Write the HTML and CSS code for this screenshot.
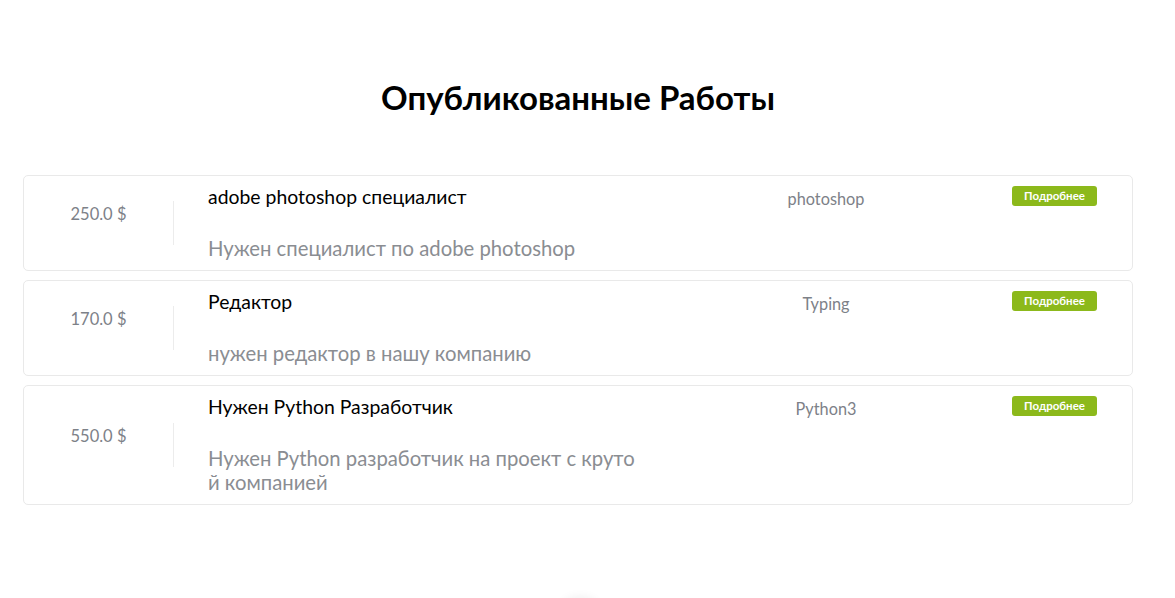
FILE: index.html
```html
<!DOCTYPE html>
<html lang="ru">
<head>
<meta charset="utf-8">
<link rel="stylesheet" href="styles.css">
</head>
<body>
<section class="works">
  <h2 class="works-title">Опубликованные Работы</h2>
  <div class="list">
    <div class="card">
      <div class="price-col"><div class="price">250.0 $</div></div>
      <div class="info">
        <div class="job-title">adobe photoshop специалист</div>
        <div class="job-desc">Нужен специалист по adobe photoshop</div>
      </div>
      <div class="tag">photoshop</div>
      <div class="action"><a class="more-btn" href="#">Подробнее</a></div>
    </div>
    <div class="card">
      <div class="price-col"><div class="price">170.0 $</div></div>
      <div class="info">
        <div class="job-title">Редактор</div>
        <div class="job-desc">нужен редактор в нашу компанию</div>
      </div>
      <div class="tag">Typing</div>
      <div class="action"><a class="more-btn" href="#">Подробнее</a></div>
    </div>
    <div class="card">
      <div class="price-col"><div class="price">550.0 $</div></div>
      <div class="info">
        <div class="job-title">Нужен Python Разработчик</div>
        <div class="job-desc">Нужен Python разработчик на проект с крутой компанией</div>
      </div>
      <div class="tag">Python3</div>
      <div class="action"><a class="more-btn" href="#">Подробнее</a></div>
    </div>
  </div>
  <div class="to-top"></div>
</section>
</body>
</html>
```
FILE: styles.css
```css
html, body {
  margin: 0;
  padding: 0;
  background: #fff;
}
body {
  font-family: "Lato", "Noto Sans", sans-serif;
  color: #000;
  overflow: hidden;
  height: 598px;
}
.works {
  position: relative;
  height: 598px;
  padding-top: 77px;
  box-sizing: border-box;
  overflow: hidden;
}
.works-title {
  margin: 0 0 58px 23px;
  width: 1110px;
  text-align: center;
  font-size: 33px;
  font-weight: 700;
  line-height: 40px;
}
.list {
  width: 1110px;
  margin-left: 23px;
  display: flex;
  flex-direction: column;
  gap: 9px;
}
.card {
  display: grid;
  grid-template-columns: 150px 466px 1fr 120px;
  border: 1px solid #e9e9e9;
  border-radius: 5px;
}
.price-col {
  display: flex;
  align-items: center;
}
.price {
  width: 100%;
  height: 44px;
  line-height: 26px;
  text-align: center;
  border-right: 1px solid #ececec;
  font-size: 16.5px;
  color: #7d8188;
}
.info {
  padding: 8px 0 10px 34px;
}
.job-title {
  font-size: 19.4px;
  line-height: 26px;
  color: #000;
  margin-bottom: 26px;
}
.job-desc {
  width: 432px;
  font-size: 20.3px;
  line-height: 24px;
  color: #8a8d92;
  word-break: break-all;
}
.tag {
  text-align: center;
  padding-top: 13px;
  font-size: 16.3px;
  line-height: 20px;
  color: #7d8188;
}
.action {
  padding-top: 10px;
}
.more-btn {
  display: block;
  width: 85px;
  height: 20px;
  line-height: 20px;
  text-align: center;
  background: #8cb91b;
  color: #fff;
  font-size: 11.5px;
  font-weight: 700;
  border-radius: 3px;
  text-decoration: none;
}
.to-top {
  position: absolute;
  left: 558px;
  bottom: -40px;
  width: 44px;
  height: 40px;
  border-radius: 50%;
  box-shadow: 0 -2px 10px rgba(0,0,0,0.06);
}
```
